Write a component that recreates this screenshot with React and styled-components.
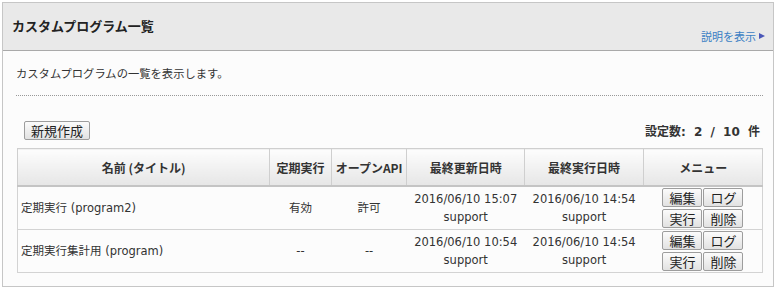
import React from "react";
import styled, { createGlobalStyle } from "styled-components";

const Global = createGlobalStyle`
  body {
    margin: 0;
    background: #fff;
    font-family: "DejaVu Sans", "Noto Sans CJK JP", sans-serif;
    color: #333;
  }
`;

// ------- Panel -------
const Panel = styled.div`
  margin: 2px;
  width: 772px;
  height: 285px;
  border: 1px solid #c6c6c6;
  background: #fcfcfc;
  box-sizing: border-box;
`;

const Header = styled.div`
  height: 48px;
  background: #e9e9e9;
  border-bottom: 1px solid #a9a9a9;
  display: flex;
  justify-content: space-between;
  box-sizing: border-box;
  padding: 0 8px 0 9px;
`;

const Title = styled.h1`
  margin: 0;
  font-family: "Noto Sans CJK JP", sans-serif;
  font-size: 13px;
  font-weight: bold;
  color: #222;
  line-height: 45px;
`;

const HelpLink = styled.a`
  align-self: flex-end;
  margin-bottom: 6px;
  font-family: "Noto Sans CJK JP", sans-serif;
  font-size: 11px;
  color: #3b7fc4;
  text-decoration: none;
  display: flex;
  align-items: center;
  gap: 3px;
`;

const Arrow = styled.span`
  width: 0;
  height: 0;
  border-left: 6px solid #4a57b8;
  border-top: 3.5px solid transparent;
  border-bottom: 3.5px solid transparent;
`;

const Body = styled.div`
  padding: 14px 10px 0 13px;
`;

const Lead = styled.p`
  margin: 0;
  font-family: "Noto Sans CJK JP", sans-serif;
  font-size: 11.3px;
  line-height: 17px;
  color: #333;
  padding-bottom: 13px;
  border-bottom: 1px dotted #999;
`;

const Toolbar = styled.div`
  display: flex;
  justify-content: space-between;
  align-items: center;
  margin-top: 25px;
  padding: 0 3px 0 8px;
`;

const Count = styled.span`
  font-size: 12px;
  font-weight: bold;
  word-spacing: 4px;
  color: #333;
`;

// ------- Buttons -------
const Btn = styled.button`
  font-family: "Noto Sans CJK JP", sans-serif;
  font-size: 13px;
  line-height: 1;
  color: #222;
  padding: 0 6px;
  height: 19px;
  background: linear-gradient(#fbfbfb, #e2e2e2);
  border: 1px solid #9d9d9d;
  border-radius: 2px;
  cursor: pointer;
`;

// ------- Table -------
const Table = styled.table`
  margin: 8px 0 0 1px;
  width: 746px;
  border-collapse: collapse;
  font-size: 11.5px;
  color: #333;
`;

const Th = styled.th`
  height: 36px;
  background: linear-gradient(#fdfdfd, #e6e6e6);
  border: 1px solid #cfcfcf;
  border-bottom: 2px solid #c4c4c4;
  font-family: "Noto Sans CJK JP", sans-serif;
  font-weight: bold;
  font-size: 12px;
  color: #333;
  width: ${p => p.w}px;
  padding: 0;
  white-space: nowrap;
`;

const Td = styled.td`
  height: 42px;
  border: 1px solid #d3d3d3;
  border-left: none;
  border-right: none;
  text-align: ${p => (p.left ? "left" : "center")};
  padding: ${p => (p.left ? "0 3px" : "0")};
  line-height: 18px;
  white-space: nowrap;
  &:first-child { border-left: 1px solid #d3d3d3; }
  &:last-child { border-right: 1px solid #d3d3d3; }
`;

const Menu = styled.div`
  display: flex;
  flex-direction: column;
  align-items: center;
  gap: 2px;
  padding: 1px 0;
`;

const MenuRow = styled.div`
  display: flex;
  gap: 1px;
`;

const rows = [
  { name: "定期実行 (program2)", sched: "有効", api: "許可", updated: "2016/06/10 15:07", run: "2016/06/10 14:54" },
  { name: "定期実行集計用 (program)", sched: "--", api: "--", updated: "2016/06/10 10:54", run: "2016/06/10 14:54" },
];

export default function App() {
  return (
    <>
      <Global />
      <Panel>
        <Header>
          <Title>カスタムプログラム一覧</Title>
          <HelpLink href="#">説明を表示<Arrow /></HelpLink>
        </Header>
        <Body>
          <Lead>カスタムプログラムの一覧を表示します。</Lead>
          <Toolbar>
            <Btn>新規作成</Btn>
            <Count>設定数: 2 / 10 件</Count>
          </Toolbar>
          <Table>
            <thead>
              <tr>
                <Th w={255}>名前 (タイトル)</Th>
                <Th w={61}>定期実行</Th>
                <Th w={75}>オープンAPI</Th>
                <Th w={117}>最終更新日時</Th>
                <Th w={119}>最終実行日時</Th>
                <Th w={119}>メニュー</Th>
              </tr>
            </thead>
            <tbody>
              {rows.map(r => (
                <tr key={r.name}>
                  <Td left>{r.name}</Td>
                  <Td>{r.sched}</Td>
                  <Td>{r.api}</Td>
                  <Td>{r.updated}<br />support</Td>
                  <Td>{r.run}<br />support</Td>
                  <Td>
                    <Menu>
                      <MenuRow>
                        <Btn>編集</Btn>
                        <Btn>ログ</Btn>
                      </MenuRow>
                      <MenuRow>
                        <Btn>実行</Btn>
                        <Btn>削除</Btn>
                      </MenuRow>
                    </Menu>
                  </Td>
                </tr>
              ))}
            </tbody>
          </Table>
        </Body>
      </Panel>
    </>
  );
}
